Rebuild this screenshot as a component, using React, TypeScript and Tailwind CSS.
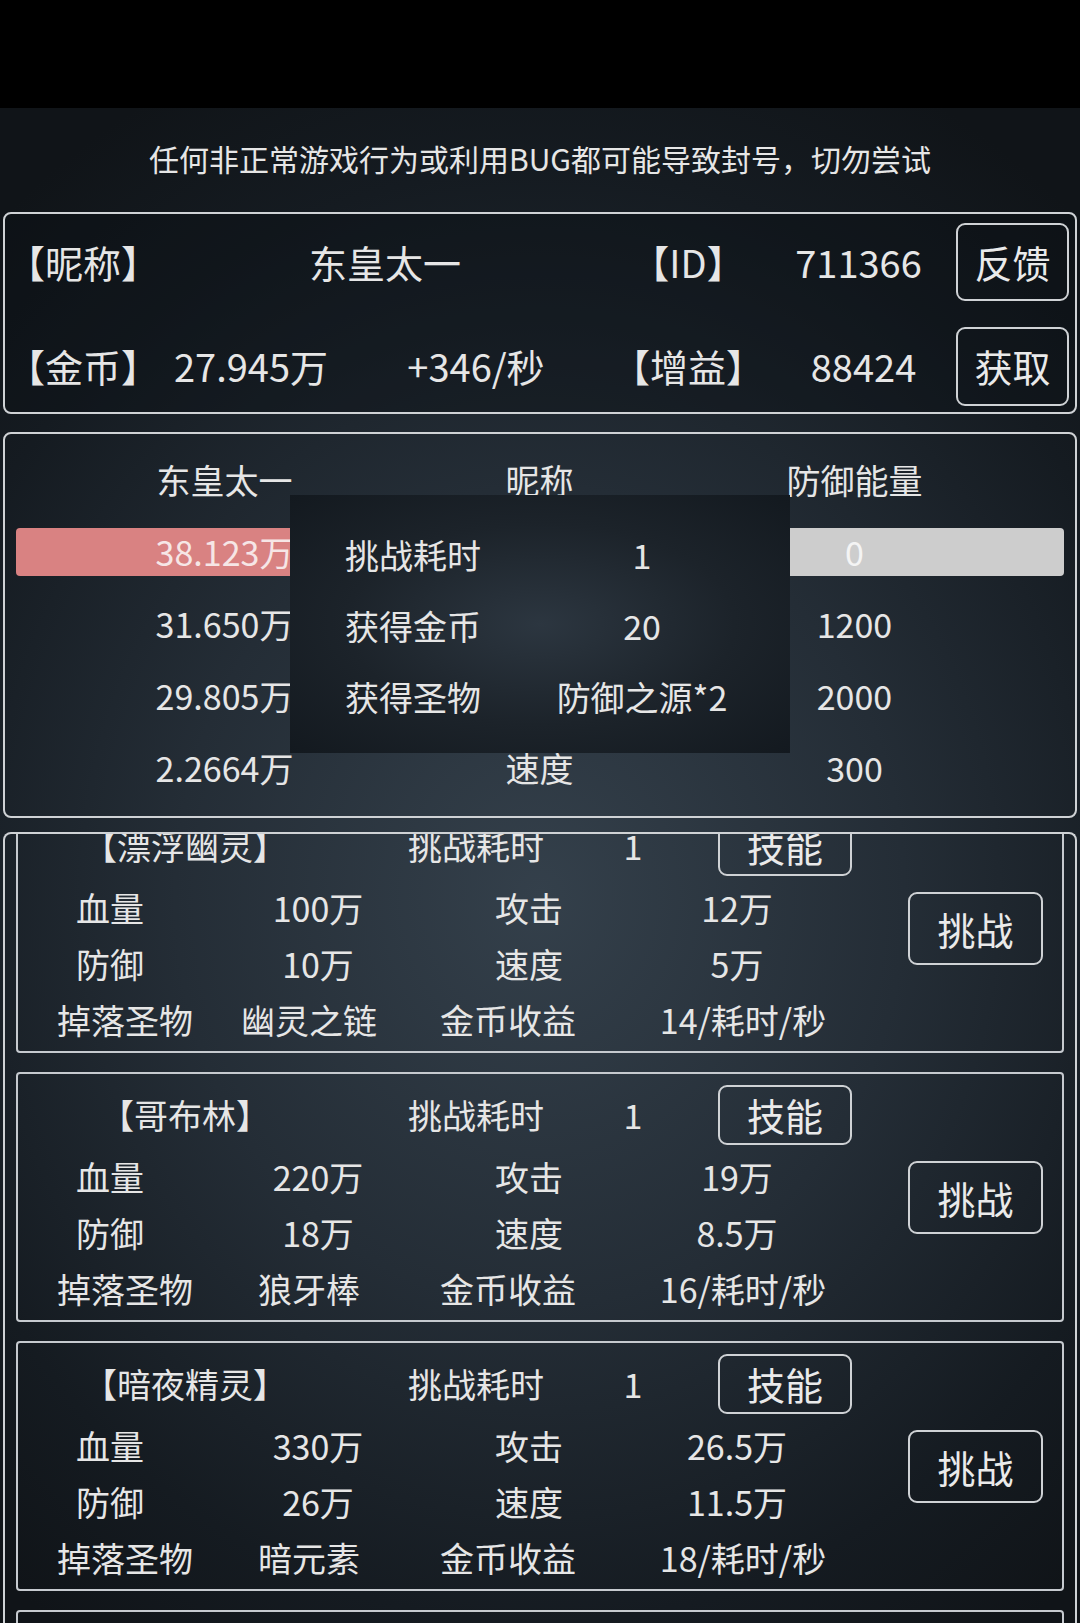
import React from 'react';

interface Monster {
  name: string;
  hp: string;
  atk: string;
  def: string;
  spd: string;
  relic: string;
  gold: string;
}

const monsters: Monster[] = [
  { name: '【漂浮幽灵】', hp: '100万', atk: '12万', def: '10万', spd: '5万', relic: '幽灵之链', gold: '14/耗时/秒' },
  { name: '【哥布林】', hp: '220万', atk: '19万', def: '18万', spd: '8.5万', relic: '狼牙棒', gold: '16/耗时/秒' },
  { name: '【暗夜精灵】', hp: '330万', atk: '26.5万', def: '26万', spd: '11.5万', relic: '暗元素', gold: '18/耗时/秒' },
  { name: '【石像鬼】', hp: '450万', atk: '35万', def: '34万', spd: '15万', relic: '石之心', gold: '20/耗时/秒' },
];

// rows of the player stat panel: [name column, middle label, right column]
// middle labels of the first rows sit under the popup, so they are left empty
const statRows = [
  ['31.650万', '', '1200'],
  ['29.805万', '', '2000'],
  ['2.2664万', '速度', '300'],
];

const rewardRows = [
  ['挑战耗时', '1'],
  ['获得金币', '20'],
  ['获得圣物', '防御之源*2'],
];

const OutlineButton: React.FC<{ label: string; className?: string }> = ({ label, className = '' }) => (
  <div
    className={`flex items-center justify-center rounded-[9px] border-2 border-[#cfd2d5] text-[38px] leading-none text-[#eaeaea] ${className}`}
  >
    {label}
  </div>
);

const MonsterCard: React.FC<{ m: Monster; className?: string }> = ({ m, className = '' }) => (
  <div className={`flex h-[250px] shrink-0 rounded-[4px] border-2 border-[#c6cacf] ${className}`}>
    <div className="flex flex-col pt-[11px]">
      {/* name / time / skill */}
      <div className="flex h-[60px] items-center text-[34px] leading-none">
        <div className="w-[334px] text-center">{m.name}</div>
        <div className="w-[248px] text-center">挑战耗时</div>
        <div className="w-[66px] text-center">1</div>
        <OutlineButton label="技能" className="ml-[52px] h-[60px] w-[134px]" />
      </div>
      <div className="mt-[4px] flex h-[56px] items-center text-[34px] leading-none">
        <div className="w-[184px] text-center">血量</div>
        <div className="w-[232px] text-center">{m.hp}</div>
        <div className="w-[190px] text-center">攻击</div>
        <div className="w-[226px] text-center">{m.atk}</div>
      </div>
      <div className="flex h-[56px] items-center text-[34px] leading-none">
        <div className="w-[184px] text-center">防御</div>
        <div className="w-[232px] text-center">{m.def}</div>
        <div className="w-[190px] text-center">速度</div>
        <div className="w-[226px] text-center">{m.spd}</div>
      </div>
      <div className="flex h-[56px] items-center text-[34px] leading-none">
        <div className="w-[214px] text-center">掉落圣物</div>
        <div className="w-[154px] text-center">{m.relic}</div>
        <div className="w-[244px] text-center">金币收益</div>
        <div className="w-[226px] text-center">{m.gold}</div>
      </div>
    </div>
    <div className="ml-auto mr-[19px] pt-[87px]">
      <OutlineButton label="挑战" className="h-[73px] w-[135px]" />
    </div>
  </div>
);

const App: React.FC = () => {
  return (
    <div className="h-[1623px] w-[1080px] overflow-hidden bg-black font-['Noto_Sans_CJK_SC','Noto_Sans',sans-serif] text-[#e6e6e6]">
      <div className="h-[108px] bg-black" />

      <div className="h-[1515px] bg-[radial-gradient(ellipse_75%_60%_at_50%_52%,#34404b_0%,#242d36_45%,#151b21_80%,#101418_100%)]">
        {/* warning */}
        <div className="flex h-[100px] items-center justify-center text-[30px] leading-none">
          任何非正常游戏行为或利用BUG都可能导致封号，切勿尝试
        </div>

        {/* account panel */}
        <div className="mx-[3px] mt-[4px] flex h-[202px] flex-col rounded-[8px] border-2 border-[#cfd2d5] bg-[#0b0f13]/40 pt-[8px]">
          <div className="flex h-[80px] items-center text-[38px] leading-none">
            <div className="w-[150px] pl-[2px]">【昵称】</div>
            <div className="w-[460px] text-center">东皇太一</div>
            <div className="w-[146px] text-center">【ID】</div>
            <div className="w-[195px] text-center">711366</div>
            <OutlineButton label="反馈" className="h-[78px] w-[113px]" />
          </div>
          <div className="mt-[24px] flex h-[80px] items-center text-[38px] leading-none">
            <div className="w-[150px] pl-[2px]">【金币】</div>
            <div className="w-[192px] text-center">27.945万</div>
            <div className="w-[258px] text-center">+346/秒</div>
            <div className="w-[166px] text-center">【增益】</div>
            <div className="w-[185px] text-center">88424</div>
            <OutlineButton label="获取" className="h-[79px] w-[113px]" />
          </div>
        </div>

        {/* player stat panel */}
        <div className="relative mx-[3px] mt-[18px] h-[386px] rounded-[8px] border-2 border-[#cfd2d5] pt-[10px] text-[34px] leading-none">
          <div className="grid h-[72px] grid-cols-[315px_315px_315px] items-center pl-[62px] text-center">
            <div>东皇太一</div>
            <div>昵称</div>
            <div>防御能量</div>
          </div>
          <div className="mx-[11px] my-[12px] grid h-[48px] grid-cols-[315px_315px_315px] items-center rounded-[4px] bg-[linear-gradient(to_right,#d98282_0%,#d98282_50%,#cdcdcd_50%,#cdcdcd_100%)] pl-[51px] text-center">
            <div className="text-[#f6e6e6]">38.123万</div>
            <div />
            <div className="text-[#f4f4f4]">0</div>
          </div>
          {statRows.map((r) => (
            <div key={r[0]} className="grid h-[72px] grid-cols-[315px_315px_315px] items-center pl-[62px] text-center">
              <div>{r[0]}</div>
              <div>{r[1]}</div>
              <div>{r[2]}</div>
            </div>
          ))}

          {/* challenge result popup */}
          <div className="absolute left-[285px] top-[61px] h-[258px] w-[500px] bg-[radial-gradient(ellipse_at_center,#2c3640_0%,#1c232a_55%,#13191f_100%)] pt-[24px]">
            {rewardRows.map((r) => (
              <div key={r[0]} className="flex h-[71px] items-center">
                <div className="w-[246px] text-center">{r[0]}</div>
                <div className="w-[212px] text-center">{r[1]}</div>
              </div>
            ))}
          </div>
        </div>

        {/* monster list */}
        <div className="mx-[3px] mt-[14px] h-[800px] overflow-hidden rounded-t-[8px] border-2 border-b-0 border-[#cfd2d5] px-[11px]">
          <div className="-mt-[31px] flex flex-col gap-[19px]">
            {monsters.map((m) => (
              <MonsterCard key={m.name} m={m} />
            ))}
          </div>
        </div>
      </div>
    </div>
  );
};

export default App;
